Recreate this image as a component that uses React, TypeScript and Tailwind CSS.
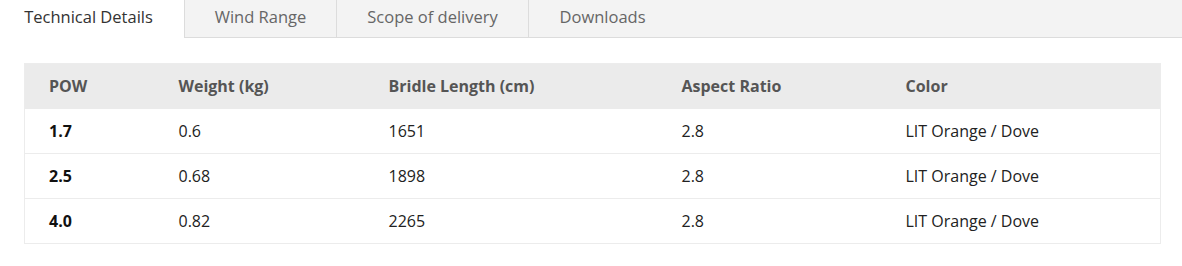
import React from "react";

const tabs = ["Technical Details", "Wind Range", "Scope of delivery", "Downloads"];
const widths = ["w-[185px] pr-[7px]", "w-[152px]", "w-[192px]", "w-[147px]"];
const cols = ["POW", "Weight (kg)", "Bridle Length (cm)", "Aspect Ratio", "Color"];
const colW = ["w-[130px]", "w-[210px]", "w-[293px]", "w-[224px]", ""];
const rows = [
  ["1.7", "0.6", "1651", "2.8", "LIT Orange / Dove"],
  ["2.5", "0.68", "1898", "2.8", "LIT Orange / Dove"],
  ["4.0", "0.82", "2265", "2.8", "LIT Orange / Dove"],
];

export default function App() {
  return (
    <div className="w-[1182px] h-[266px] bg-white font-['Open_Sans',sans-serif]">
      <div className="flex h-[38px] bg-[#f3f3f3] border-b border-[#dcdcdc]">
        {tabs.map((t, i) => (
          <div
            key={t}
            className={`${widths[i]} flex items-center justify-center pb-[3px] text-[16.5px] ${
              i === 0
                ? "bg-white text-[#333] h-[38px] -mb-px"
                : "text-[#666]"
            } ${i < 3 ? "border-r border-[#dcdcdc]" : ""}`}
          >
            {t}
          </div>
        ))}
      </div>
      <div className="px-[24px] pt-[25px]">
        <table className="w-[1137px] border-collapse text-[16px] table-fixed border border-[#ececec]">
          <thead>
            <tr className="bg-[#ebebeb] h-[45px]">
              {cols.map((c, i) => (
                <th
                  key={c}
                  className={`${colW[i]} text-left font-bold text-[#555] pl-[24px] p-0`}
                >
                  {c}
                </th>
              ))}
            </tr>
          </thead>
          <tbody>
            {rows.map((r, ri) => (
              <tr key={ri} className={`h-[45px] ${ri > 0 ? "border-t border-[#ececec]" : ""}`}>
                {r.map((v, ci) => (
                  <td
                    key={ci}
                    className={`pl-[24px] p-0 ${ci === 0 ? "font-bold text-[#111]" : "text-[#222]"}`}
                  >
                    {v}
                  </td>
                ))}
              </tr>
            ))}
          </tbody>
        </table>
      </div>
    </div>
  );
}
